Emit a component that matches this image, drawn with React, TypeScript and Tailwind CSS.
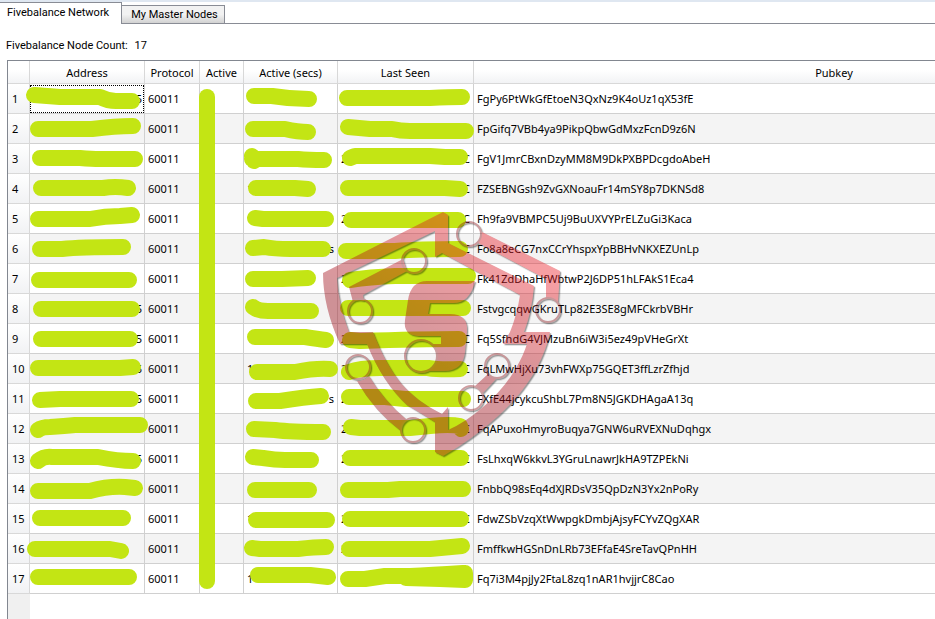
interface NodeRow {
  pubkey: string;
  address?: string;
  secsStart?: string;
  secsEnd?: string;
  seenStart?: string;
  seenEnd?: string;
}

const nodes: NodeRow[] = [
  { pubkey: "FgPy6PtWkGfEtoeN3QxNz9K4oUz1qX53fE", address: "5" },
  { pubkey: "FpGifq7VBb4ya9PikpQbwGdMxzFcnD9z6N" },
  { pubkey: "FgV1JmrCBxnDzyMM8M9DkPXBPDcgdoAbeH", seenStart: "2", seenEnd: "C" },
  { pubkey: "FZSEBNGsh9ZvGXNoauFr14mSY8p7DKNSd8", secsStart: "1", seenEnd: "C" },
  { pubkey: "Fh9fa9VBMPC5Uj9BuUXVYPrELZuGi3Kaca", seenStart: "2", seenEnd: "C" },
  { pubkey: "Fo8a8eCG7nxCCrYhspxYpBBHvNKXEZUnLp", secsEnd: "s", seenEnd: "C" },
  { pubkey: "Fk41ZdDhaHfWbtwP2J6DP51hLFAkS1Eca4", seenStart: "2" },
  { pubkey: "FstvgcqqwGKruTLp82E3SE8gMFCkrbVBHr", address: "5" },
  { pubkey: "Fq5SfhdG4VJMzuBn6iW3i5ez49pVHeGrXt", address: "5", seenStart: "2", seenEnd: "C" },
  { pubkey: "FqLMwHjXu73vhFWXp75GQET3ffLzrZfhjd", address: "5", secsStart: "10h 10m", seenStart: "2", seenEnd: "C" },
  { pubkey: "FXfE44jcykcuShbL7Pm8N5JGKDHAgaA13q", address: "5", secsEnd: "s", seenStart: "2" },
  { pubkey: "FqAPuxoHmyroBuqya7GNW6uRVEXNuDqhgx", seenStart: "2", seenEnd: "0 UTC" },
  { pubkey: "FsLhxqW6kkvL3YGruLnawrJkHA9TZPEkNi", address: "5", seenStart: "2", seenEnd: "C" },
  { pubkey: "FnbbQ98sEq4dXJRDsV35QpDzN3Yx2nPoRy", secsStart: "1" },
  { pubkey: "FdwZSbVzqXtWwpgkDmbjAjsyFCYvZQgXAR", secsStart: "1", seenStart: "2", seenEnd: "C" },
  { pubkey: "FmffkwHGSnDnLRb73EFfaE4SreTavQPnHH", seenStart: "2" },
  { pubkey: "Fq7i3M4pjJy2FtaL8zq1nAR1hvjjrC8Cao", secsStart: "1" },
];

const columns = ["Address", "Protocol", "Active", "Active (secs)", "Last Seen", "Pubkey"];

// Marker strokes over the private cells, one line per table row
const markerStrokes = [
  "M34 95 L60 97 H100 Q108 101 116 101 H132 M254 96 H272 Q290 99 309 99 M347 98 H430 Q450 97 462 97",
  "M38 129 H92 Q115 126 133 126 M253 129 H285 Q298 132 308 132 M348 127 L370 129 H392 Q400 131 410 131 H466",
  "M40 158 H80 Q92 159 100 159 H135 M252 156 L254 161 M252 159 H298 Q308 160 324 160 M350 158 L355 156 H430 L445 157 H460",
  "M41 188 H103 Q115 186 128 188 M256 188 H295 L308 189 M348 188 H445 L460 189",
  "M38 219 H90 Q105 216 120 216 L132 215 M255 218 L263 219 H326 M351 220 H458",
  "M40 249 H62 Q80 247 123 247 M253 248 L264 247 Q275 249 290 249 H323 M346 251 H395 Q420 249 460 249",
  "M39 280 H129 M253 279 H282 L308 278 M350 280 Q370 277 395 276 H468",
  "M41 309 H132 M253 307 Q258 311 268 311 H311 M348 308 H463",
  "M41 339 H130 M255 337 H305 Q318 339 326 340 M350 340 L360 341 Q420 339 459 339",
  "M38 368 H120 L133 367 M257 372 H295 Q315 368 330 369 M349 372 Q360 368 380 368 H428 Q440 370 460 369",
  "M40 400 L60 399 H131 M256 401 H280 Q305 397 321 396 M349 397 H385 L405 399 H463",
  "M38 430 Q42 427 50 427 Q65 426 75 425 H140 M254 429 L275 430 Q290 432 323 432 M351 427 L360 428 H410 L430 426 Q450 424 460 426 L461 429",
  "M38 461 Q44 456 52 457 H98 Q118 461 133 461 M253 457 L263 458 Q275 460 285 460 H311 M350 458 H461",
  "M38 491 H90 Q108 486 125 487 L135 488 M255 490 H309 M348 490 H388 L400 489 H463",
  "M40 518 H123 M256 520 H327 M350 519 H461",
  "M35 549 H110 L121 551 M252 548 L260 549 H298 Q315 547 326 547 M349 549 H430 L462 546",
  "M38 577 H129 M258 575 H310 L328 577 M348 579 H365 L385 576 H410 Q430 575 463 573 M406 578 L440 579 L465 580 L465 573",
  "M207 97 V581",
];

const circuitNodes = [
  { x: 414, y: 261, r: 12 },
  { x: 360, y: 311, r: 12 },
  { x: 469, y: 234, r: 12 },
  { x: 548, y: 310, r: 12 },
  { x: 358, y: 367, r: 12 },
  { x: 413, y: 430, r: 12 },
  { x: 471, y: 398, r: 12 },
  { x: 497, y: 366, r: 12 },
  { x: 421, y: 356, r: 16 },
];

function MarkerLayer() {
  return (
    <svg className="pointer-events-none absolute left-0 top-0" width="600" height="619" viewBox="0 0 600 619" aria-hidden="true">
      <g fill="none" stroke="#c3e514" strokeWidth="16" strokeLinecap="round" strokeLinejoin="round">
        {markerStrokes.map((d) => (
          <path key={d} d={d} />
        ))}
      </g>
    </svg>
  );
}

function ShieldLogo() {
  return (
    <svg className="pointer-events-none absolute left-0 top-0" width="600" height="619" viewBox="0 0 600 619" aria-hidden="true">
      <defs>
        <linearGradient id="shield" gradientUnits="userSpaceOnUse" x1="515" y1="255" x2="440" y2="365">
          <stop offset="0" stopColor="#ea1c26" />
          <stop offset="1" stopColor="#9c0a16" />
        </linearGradient>
        <filter id="edge" x="-5%" y="-5%" width="110%" height="110%" colorInterpolationFilters="sRGB">
          <feDropShadow dx="1.3" dy="1.3" stdDeviation="0.6" floodColor="#000" floodOpacity="0.9" />
        </filter>
      </defs>
      <g opacity="0.42">
        <g filter="url(#edge)">
          <g fill="url(#shield)">
            {/* Shield band */}
            <path
              fillRule="evenodd"
              d="M323 273 L443 212 L448 215 V243 L534 286 Q532 311 524 332 H550 C543 365 524 393 497 417 Q473 439 443 456 L435 452 V422 L407 405 Q382 382 367 344 H340 Q323 307 323 273 Z
                 M337 278 L435 231 V257 L442 253 L520 295 Q517 315 510 332 L503 344 H527 C518 371 500 393 483 407 Q466 422 448 430 V407 L442 414 C407 396 391 377 373 332 H349 Q338 303 337 278 Z"
            />
            {/* Letter mark */}
            <path d="M475 281 Q470 303 453 303 H430 L428 314 H450 Q468 314 467 331 L465 352 Q463 371 444 371 H426 A16 16 0 0 0 437 357 Q437 349 431 344 H441 V336 H418 Q403 335 405 320 L408 300 Q411 281 427 281 Z" />
            {/* Circuit traces */}
            <path d="M403 259 L349 287 L353 302 Q357 299 364 301 L363 295 L407 271 Z" />
            <path d="M482 232 L560 271 L558 303 Q552 298 546 299 V279 L478 243 Z" />
            <path d="M369 376 Q384 401 406 419 Q401 424 401 431 Q374 411 357 381 Q364 381 369 376 Z" />
            <path d="M475 386 L488 374 Q491 378 496 379 L483 393 Q480 388 475 386 Z" />
          </g>
          <g fill="none" stroke="#8c1a20" strokeWidth="2">
            {circuitNodes.map((n) => (
              <circle key={`${n.x}-${n.y}`} cx={n.x} cy={n.y} r={n.r} />
            ))}
          </g>
        </g>
      </g>
    </svg>
  );
}

export default function App() {
  return (
    <div className="relative flex h-screen flex-col overflow-hidden bg-white font-['Noto_Sans','Open_Sans',sans-serif] text-[11px] leading-4 text-black">
      {/* Tab bar */}
      <div role="tablist" className="flex h-6 items-end border-t-2 border-[#dfe7f1] font-[Roboto,sans-serif]">
        <button
          type="button"
          role="tab"
          aria-selected="true"
          className="h-full border-r border-t border-[#898c95] bg-white pb-0.5 pl-[7px] pr-3"
        >
          Fivebalance Network
        </button>
        <button
          type="button"
          role="tab"
          aria-selected="false"
          className="h-[19px] border border-l-0 border-[#898c95] bg-linear-to-b from-[#f2f2f2] from-50% to-[#d2d2d2] pl-[9px] pr-1.5 pt-px"
        >
          My Master Nodes
        </button>
        <div className="h-full flex-1 border-b border-[#898c95]" />
      </div>

      <p className="pb-1.5 pl-1.5 pt-3.5 font-[Roboto,sans-serif]">
        Fivebalance Node Count: <span className="ml-1">17</span>
      </p>

      {/* Node table */}
      <div className="ml-[7px] flex-1 overflow-hidden border-l border-t border-[#828790] bg-linear-to-r from-[#f0f0f0] from-[22px] to-white to-[22px]">
        <table className="w-[1187px] table-fixed border-separate border-spacing-0">
          <colgroup>
            <col className="w-[22px]" />
            <col className="w-[115px]" />
            <col className="w-[55px]" />
            <col className="w-[44px]" />
            <col className="w-[94px]" />
            <col className="w-[136px]" />
            <col />
          </colgroup>
          <thead>
            <tr className="h-[23px] bg-linear-to-b from-white from-40% to-[#f1f2f4]">
              <td className="border-b border-r border-[#d8d8d8]" />
              {columns.map((name) => (
                <th key={name} scope="col" className="whitespace-nowrap border-b border-r border-[#d8d8d8] p-0 pt-0.5 font-normal">
                  {name}
                </th>
              ))}
            </tr>
          </thead>
          <tbody>
            {nodes.map((node, i) => (
              <tr key={node.pubkey} className="h-[30px] bg-white even:bg-[#f4f4f4]">
                <th scope="row" className="border-b border-r border-[#d8d8d8] bg-linear-to-b from-white to-[#f1f2f4] p-0 pl-1 text-left font-normal">
                  {i + 1}
                </th>
                <td className="border-b border-r border-[#d0d0d0] p-0 text-right">
                  <div className={i === 0 ? "border border-dotted border-black py-[5px] pr-px" : "pr-[2px]"}>
                    {node.address ?? "\u00a0"}
                  </div>
                </td>
                <td className="border-b border-r border-[#d0d0d0] p-0 pl-[3px]">60011</td>
                <td className="border-b border-r border-[#d0d0d0] p-0" />
                <td className="border-b border-r border-[#d0d0d0] p-0 px-[3px]">
                  <div className="flex justify-between">
                    <span>{node.secsStart}</span>
                    <span>{node.secsEnd}</span>
                  </div>
                </td>
                <td className="border-b border-r border-[#d0d0d0] p-0 px-[3px]">
                  <div className="flex justify-between">
                    <span>{node.seenStart}</span>
                    <span>{node.seenEnd}</span>
                  </div>
                </td>
                <td className="border-b border-[#d0d0d0] p-0 pl-[3px]">{node.pubkey}</td>
              </tr>
            ))}
          </tbody>
        </table>
      </div>

      <MarkerLayer />
      <ShieldLogo />
    </div>
  );
}
